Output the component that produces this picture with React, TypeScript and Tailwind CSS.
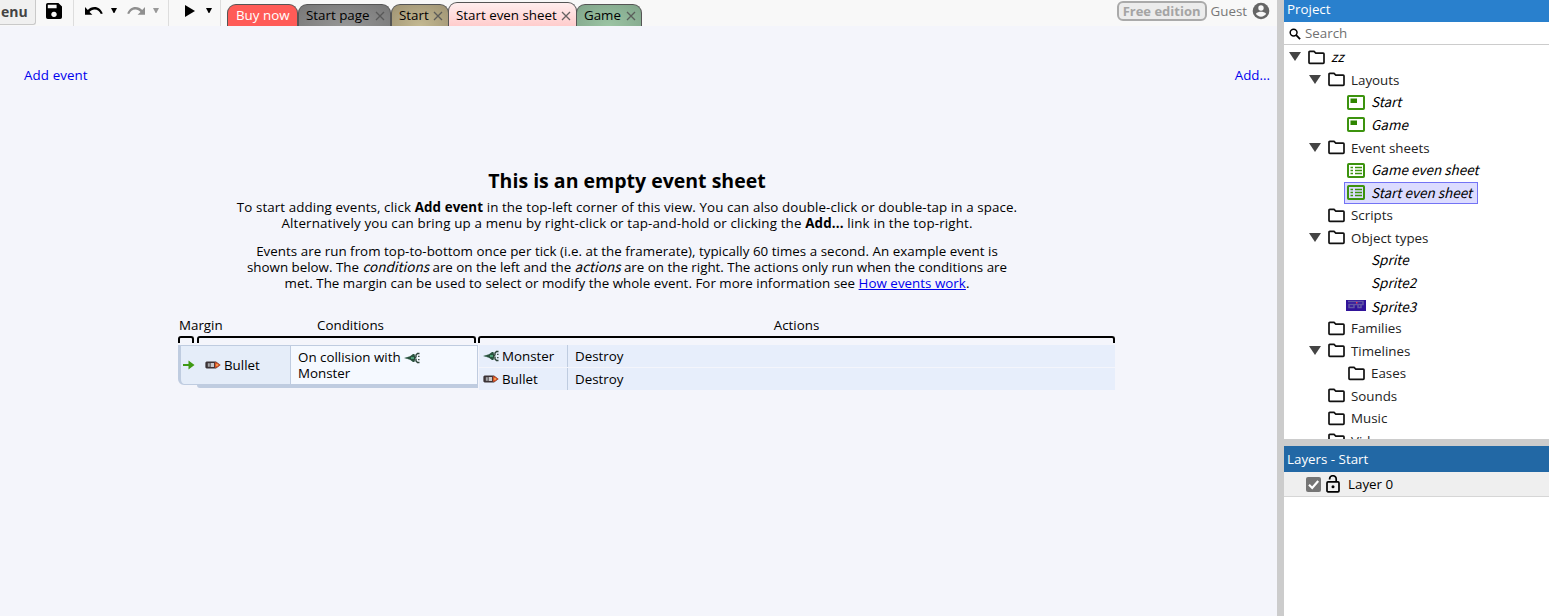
import React from "react";
import type { ReactNode } from "react";

function Oblique({ children }: { children: ReactNode }) {
  return <i className="font-['Noto_Sans_CJK_SC',sans-serif] text-[13.5px] leading-none">{children}</i>;
}

function Caret({ muted = false }: { muted?: boolean }) {
  return (
    <svg width="6" height="5" viewBox="0 0 6 5" className={muted ? "fill-[#999]" : "fill-black"}>
      <path d="M0 0h6L3.4 5h-.8z" />
    </svg>
  );
}

function ArrowCurl({ flip = false }: { flip?: boolean }) {
  return (
    <svg
      width="18"
      height="9"
      viewBox="0 0 18 9"
      className={flip ? "-scale-x-100 fill-[#8f8f8f]" : "fill-black"}
    >
      <path d="M0 1v7.8h7.4L4.5 5.9C5.8 4.4 7.5 3.5 9.5 3.5c3 0 5.3 1.9 6.3 4.6l2-.7C16.5 3.6 13.2.9 9.5.9 6.9.9 4.5 2.1 2.8 3.9z" />
    </svg>
  );
}

function FolderIcon() {
  return (
    <svg width="18" height="15" viewBox="0 0 18 15" fill="none" className="shrink-0">
      <path
        d="M1 2.200Q1 1.400 1.800 1.400H6L7.800 3.100H15.200Q16 3.100 16 3.900V12.600Q16 13.400 15.200 13.400H1.800Q1 13.400 1 12.600Z"
        stroke="#111"
        strokeWidth="1.700"
      />
    </svg>
  );
}

function LayoutIcon() {
  return (
    <svg width="18" height="15" viewBox="0 0 18 15" fill="none" className="shrink-0">
      <rect x="1" y="1" width="16" height="13" rx=".8" stroke="#3c930e" strokeWidth="2" fill="white" />
      <rect x="3.500" y="3.500" width="6.500" height="4.500" fill="#2f8500" />
    </svg>
  );
}

function SheetIcon() {
  return (
    <svg width="18" height="15" viewBox="0 0 18 15" fill="none" className="shrink-0">
      <rect x="1" y="1" width="16" height="13" rx=".8" stroke="#3c930e" strokeWidth="2" />
      <path d="M3.500 4.500h2.500M8 4.500h7M3.500 7.500h2.500M8 7.500h7M3.500 10.500h2.500M8 10.500h7" stroke="#3c930e" strokeWidth="1.700" />
    </svg>
  );
}

function SpriteThumb() {
  return (
    <svg width="20" height="11" viewBox="0 0 20 11" className="-mr-px -ml-px shrink-0">
      <rect width="20" height="11" fill="#31149a" />
      <path d="M2 1.500h15v3H3v3h5v-3M12 4v3.500h3V4" stroke="#6f68a8" strokeWidth="1.500" opacity=".8" fill="none" />
      <rect x="10" y="2" width="1.500" height="1.500" fill="#ef3b4f" />
    </svg>
  );
}

function BulletIcon() {
  return (
    <svg width="16" height="8" viewBox="0 0 16 8" className="shrink-0">
      <path d="M1.500.5H11L15.500 4 11 7.500H1.500L.4 6.500v-5z" fill="#3b3336" />
      <rect x="2.800" y="2.200" width="2" height="3.600" fill="#a5a5a8" />
      <rect x="5.600" y="2" width="3.400" height="4" fill="#c9c9cc" />
      <path d="M9.800 1.200H11.500L15.500 4l-4 2.800H9.800z" fill="#d6542a" />
      <rect x="11" y="3" width="2" height="2" fill="#f2994a" />
    </svg>
  );
}

function MonsterIcon() {
  return (
    <svg width="16" height="12" viewBox="0 0 16 12" className="inline shrink-0">
      <path d="M0 6l6-1.700 3-2.300h1.400L11 4v4l-.6 2H9L6 7.700z" fill="#29523e" />
      <path d="M15.500 1.500h-2L12 3v2l-1.500 1 1.500 1v2l1.500 1.500h2M14.800 3.800v1.200M14.800 7v1.200" stroke="#2c4338" strokeWidth="1.400" fill="none" />
      <path d="M7 5h3v2H7z" fill="#4fa078" />
      <path d="M2 5.700h2v.8H2z" fill="#5d8774" />
    </svg>
  );
}

interface TabProps {
  label: string;
  className: string;
  closable?: boolean;
}

function Tab({ label, className, closable = true }: TabProps) {
  return (
    <div
      className={`flex shrink-0 items-center justify-between rounded-t-[9px] border border-b-0 border-[#555] pr-[5px] ${
        closable ? "pl-[7px]" : "pl-2"
      } ${className}`}
    >
      <span>{label}</span>
      {closable && (
        <svg width="10" height="10" viewBox="0 0 10 10" className="mt-px stroke-[#555] opacity-90" strokeWidth="1.300">
          <path d="M1 1l8 8M9 1l-8 8" />
        </svg>
      )}
    </div>
  );
}

function Toolbar() {
  return (
    <header className="flex h-[26px] shrink-0 bg-[#f8f8f8]">
      <div className="h-[25px] w-9 rounded-br-[3px] border-r border-b border-[#c9c9c9] bg-[#f0f0f0] text-[14px] leading-[24px] font-bold text-[#444]">
        <span className="pl-px">enu</span>
      </div>
      <div className="flex w-[38px] border-r border-[#ddd] pt-[3px] pl-[10px]">
        <svg width="16" height="16" viewBox="0 0 16 16">
          <path
            fillRule="evenodd"
            d="M1.800 0H12.400L16 3.600V14.200Q16 16 14.200 16H1.800Q0 16 0 14.200V1.800Q0 0 1.800 0ZM1.800 1.800V5.300H10.600V1.800ZM8 8.700a2.700 2.700 0 1 0 .01 0Z"
            fill="black"
          />
        </svg>
      </div>
      <div className="flex w-[95px] border-r border-[#ddd] pl-[11px]">
        <span className="mt-[6px] w-[26px]"><ArrowCurl /></span>
        <span className="mt-[8px] w-[16px]"><Caret /></span>
        <span className="mt-[6px] w-[26px]"><ArrowCurl flip /></span>
        <span className="mt-[8px]"><Caret muted /></span>
      </div>
      <div className="flex w-[52px] border-r border-[#ddd] pl-[16px]">
        <svg width="10" height="12" viewBox="0 0 10 12" className="mt-[5px]">
          <path d="M0 0l10 6-10 6z" />
        </svg>
        <span className="mt-[8px] ml-[11px]"><Caret /></span>
      </div>
      <nav className="flex items-end pl-[6px] leading-[21px]">
        <Tab label="Buy now" closable={false} className="h-[22px] w-[71px] bg-[#ff5b57] text-white" />
        <Tab label="Start page" className="h-[22px] w-[93px] bg-[radial-gradient(ellipse_at_bottom,#969696,#777777)]" />
        <Tab label="Start" className="h-[22px] w-[58px] bg-[radial-gradient(ellipse_at_bottom,#c4b992,#9f9373)]" />
        <Tab
          label="Start even sheet"
          className="-ml-px h-[24px] w-[129px] bg-[linear-gradient(to_bottom,#ffeeee,#ffcccc)] pt-px leading-[23px]"
        />
        <Tab label="Game" className="-ml-px h-[22px] w-[66px] bg-[radial-gradient(ellipse_at_bottom,#9cc5a4,#80a48a)]" />
      </nav>
      <div className="ml-auto flex items-start pr-[7px]">
        <span className="mt-px h-[20px] rounded-[6px] border-2 border-[#aaa] bg-[#ececec] px-[4px] text-[13px] leading-[17px] font-bold whitespace-nowrap text-[#a4a4a4]">
          Free edition
        </span>
        <span className="ml-1 leading-[22px] text-[#777]">Guest</span>
        <svg width="18" height="18" viewBox="0 0 18 18" className="mt-[2px] ml-[5px]">
          <circle cx="9" cy="9" r="8.300" fill="#666" />
          <circle cx="9" cy="6" r="2.700" fill="#f8f8f8" />
          <path d="M3.900 11.800c1-1.500 3.500-2 5.100-2s4.100.5 5.100 2c-1 1.700-3 2.900-5.100 2.900s-4.100-1.200-5.100-2.900z" fill="#f8f8f8" />
        </svg>
      </div>
    </header>
  );
}

function Bracket({ className }: { className: string }) {
  return <div className={`h-[7px] rounded-t-[3px] border-2 border-b-0 border-black ${className}`} />;
}

interface ActionProps {
  icon: ReactNode;
  name: string;
}

function ActionRow({ icon, name }: ActionProps) {
  return (
    <div className="flex h-[22px] items-center bg-[#e7eefb]">
      <div className="flex h-full w-[89px] items-center gap-[3px] border-r border-[#bfcce0] pl-[4px]">
        {icon}
        <span>{name}</span>
      </div>
      <span className="pl-[7px]">Destroy</span>
    </div>
  );
}

function EventExample() {
  return (
    <section className="ml-[178px] w-[937px]">
      <div className="flex h-[20px] leading-[20px]">
        <span className="w-[45px] pl-px">Margin</span>
        <span className="w-[255px] text-center">Conditions</span>
        <span className="flex-1 text-center">Actions</span>
      </div>
      <div className="mt-px flex">
        <Bracket className="w-[16px]" />
        <Bracket className="ml-[3px] w-[279px]" />
        <Bracket className="ml-[2px] flex-1" />
      </div>
      <div className="mt-[2px] flex">
        <div className="w-[300px]">
          <div className="flex h-[40px] rounded-bl-[6px] border border-l-3 border-[#bfcce0] bg-[#e5edf9]">
            <div className="flex w-[24px] items-center pl-[2px]">
              <svg width="12" height="10" viewBox="0 0 12 10">
                <path d="M0 4h5.500V.5L11.500 5 5.500 9.500V6H0z" fill="#3f9a14" />
              </svg>
            </div>
            <div className="flex w-[86px] items-center gap-[3px] border-r border-[#bfcce0]">
              <BulletIcon />
              <span>Bullet</span>
            </div>
            <div className="flex-1 bg-[#f5f9ff] pt-[3px] pl-[7px] leading-[16px]">
              On collision with <MonsterIcon />
              <br />
              Monster
            </div>
          </div>
          <div className="ml-[19px] h-[3px] rounded-bl-[3px] bg-[#bfcce0]" />
        </div>
        <div className="ml-px flex flex-1 flex-col gap-px">
          <ActionRow icon={<MonsterIcon />} name="Monster" />
          <ActionRow icon={<BulletIcon />} name="Bullet" />
        </div>
      </div>
    </section>
  );
}

function EventSheet() {
  return (
    <main className="flex-1 overflow-hidden">
      <div className="flex justify-between pt-[39px] pr-[7px] pl-[24px] leading-[20px] text-[#0000ee]">
        <span className="tracking-[0.1px]">Add event</span>
        <span>Add...</span>
      </div>
      <div className="ml-[178px] w-[898px] pt-[82px] text-center whitespace-nowrap">
        <h1 className="text-[19.5px] leading-[28px] font-bold">This is an empty event sheet</h1>
        <p className="mt-[4px] leading-[16px]">
          <span className="tracking-[0.1px]">
            To start adding events, click <b>Add event</b> in the top-left corner of this view. You can also
            double-click or double-tap in a space.
          </span>
          <br />
          <span className="tracking-[0.15px]">
            Alternatively you can bring up a menu by right-click or tap-and-hold or clicking the <b>Add...</b> link in
            the top-right.
          </span>
        </p>
        <p className="mt-[12px] leading-[16px]">
          <span className="tracking-[0.035px]">
            Events are run from top-to-bottom once per tick (i.e. at the framerate), typically 60 times a second. An
            example event is
          </span>
          <br />
          shown below. The <Oblique>conditions</Oblique> are on the left and the <Oblique>actions</Oblique> are on the
          right. The actions only run when the conditions are
          <br />
          <span className="tracking-[0.025px]">
            met. The margin can be used to select or modify the whole event. For more information see{" "}
            <a className="text-[#0000ee] underline">How events work</a>.
          </span>
        </p>
      </div>
      <div className="h-[24px]" />
      <EventExample />
    </main>
  );
}

type Kind = "folder" | "layout" | "sheet" | "sprite" | "none";

interface Node {
  label: string;
  depth: 0 | 1 | 2;
  kind: Kind;
  open?: boolean;
  italic?: boolean;
  selected?: boolean;
}

const nodes: Node[] = [
  { label: "zz", depth: 0, kind: "folder", open: true, italic: true },
  { label: "Layouts", depth: 1, kind: "folder", open: true },
  { label: "Start", depth: 2, kind: "layout", italic: true },
  { label: "Game", depth: 2, kind: "layout", italic: true },
  { label: "Event sheets", depth: 1, kind: "folder", open: true },
  { label: "Game even sheet", depth: 2, kind: "sheet", italic: true },
  { label: "Start even sheet", depth: 2, kind: "sheet", italic: true, selected: true },
  { label: "Scripts", depth: 1, kind: "folder" },
  { label: "Object types", depth: 1, kind: "folder", open: true },
  { label: "Sprite", depth: 2, kind: "none", italic: true },
  { label: "Sprite2", depth: 2, kind: "none", italic: true },
  { label: "Sprite3", depth: 2, kind: "sprite", italic: true },
  { label: "Families", depth: 1, kind: "folder" },
  { label: "Timelines", depth: 1, kind: "folder", open: true },
  { label: "Eases", depth: 2, kind: "folder" },
  { label: "Sounds", depth: 1, kind: "folder" },
  { label: "Music", depth: 1, kind: "folder" },
  { label: "Videos", depth: 1, kind: "folder" },
];

const indents = ["pl-[5px]", "pl-[25px]", "pl-[45px]"];

function NodeIcon({ kind }: { kind: Kind }) {
  if (kind === "folder") return <span className="pl-px"><FolderIcon /></span>;
  if (kind === "layout") return <LayoutIcon />;
  if (kind === "sheet") return <SheetIcon />;
  if (kind === "sprite") return <SpriteThumb />;
  return <span className="w-[18px] shrink-0" />;
}

function TreeRow({ node }: { node: Node }) {
  return (
    <li className={`flex h-[22.57px] items-center ${indents[node.depth]}`}>
      <span className="w-[15px] shrink-0">
        {node.open && (
          <svg width="12" height="9" viewBox="0 0 12 9" className="-mt-px fill-[#444]">
            <path d="M0 0h12L6 9z" />
          </svg>
        )}
      </span>
      <span
        className={`flex h-[22px] items-center border pr-[5px] pl-[2px] ${
          node.selected ? "border-[#7373f5] bg-[#dcdcff]" : "border-transparent"
        }`}
      >
        <NodeIcon kind={node.kind} />
        <span
          className={`leading-[20px] whitespace-nowrap ${node.kind === "folder" ? "ml-[5px]" : "ml-[6px]"} ${
            node.kind === "sprite" ? "pt-[3px]" : ""
          }`}
        >
          {node.italic ? <Oblique>{node.label}</Oblique> : <span className="text-[#222]">{node.label}</span>}
        </span>
      </span>
    </li>
  );
}

function ProjectPanel() {
  return (
    <section className="flex h-[439px] flex-col overflow-hidden bg-white">
      <h2 className="h-[22px] shrink-0 bg-[#2980cd] pl-[3px] leading-[19px] text-white">Project</h2>
      <div className="flex h-[23px] shrink-0 items-center border-b border-[#ccc] pl-[5px]">
        <svg width="12" height="12" viewBox="0 0 13 13" fill="none" stroke="black" className="mt-px">
          <circle cx="5" cy="5" r="3.700" strokeWidth="1.600" />
          <path d="M7.800 7.800L12 12" strokeWidth="2" />
        </svg>
        <span className="ml-[4px] text-[#707070]">Search</span>
      </div>
      <ul className="mt-px">
        {nodes.map((n) => (
          <TreeRow key={n.label + n.kind} node={n} />
        ))}
      </ul>
    </section>
  );
}

function LayersPanel() {
  return (
    <section className="flex-1 bg-white">
      <h2 className="h-[26px] bg-[#2268a5] pl-[3px] leading-[26px] text-white">Layers - Start</h2>
      <div className="flex h-[25px] items-center border-b border-[#d6d6d6] bg-[#efefef] pl-[22px]">
        <svg width="15" height="15" viewBox="0 0 15 15">
          <rect width="15" height="15" rx="2" fill="#757575" />
          <path d="M3 7.800l3.200 3.200L12.200 4" stroke="white" strokeWidth="2.200" fill="none" />
        </svg>
        <svg width="14" height="18" viewBox="0 0 14 18" fill="none" stroke="black" className="ml-[5px]">
          <rect x="1" y="6.900" width="12" height="9.900" rx="1" strokeWidth="1.700" />
          <path d="M3.600 4.600V4a3.200 3.200 0 0 1 6.600 0v2.900" strokeWidth="1.700" />
          <circle cx="7" cy="11.800" r="1.500" fill="black" stroke="none" />
        </svg>
        <span className="ml-[8px]">Layer 0</span>
      </div>
    </section>
  );
}

export default function App() {
  return (
    <div className="flex h-[616px] w-[1549px] overflow-hidden bg-[#ccc] font-['Open_Sans',sans-serif] text-[13.35px] text-black">
      <div className="flex w-[1277px] flex-col bg-[#f4f5fb]">
        <Toolbar />
        <EventSheet />
      </div>
      <aside className="ml-[7px] flex flex-1 flex-col gap-[7px]">
        <ProjectPanel />
        <LayersPanel />
      </aside>
    </div>
  );
}
